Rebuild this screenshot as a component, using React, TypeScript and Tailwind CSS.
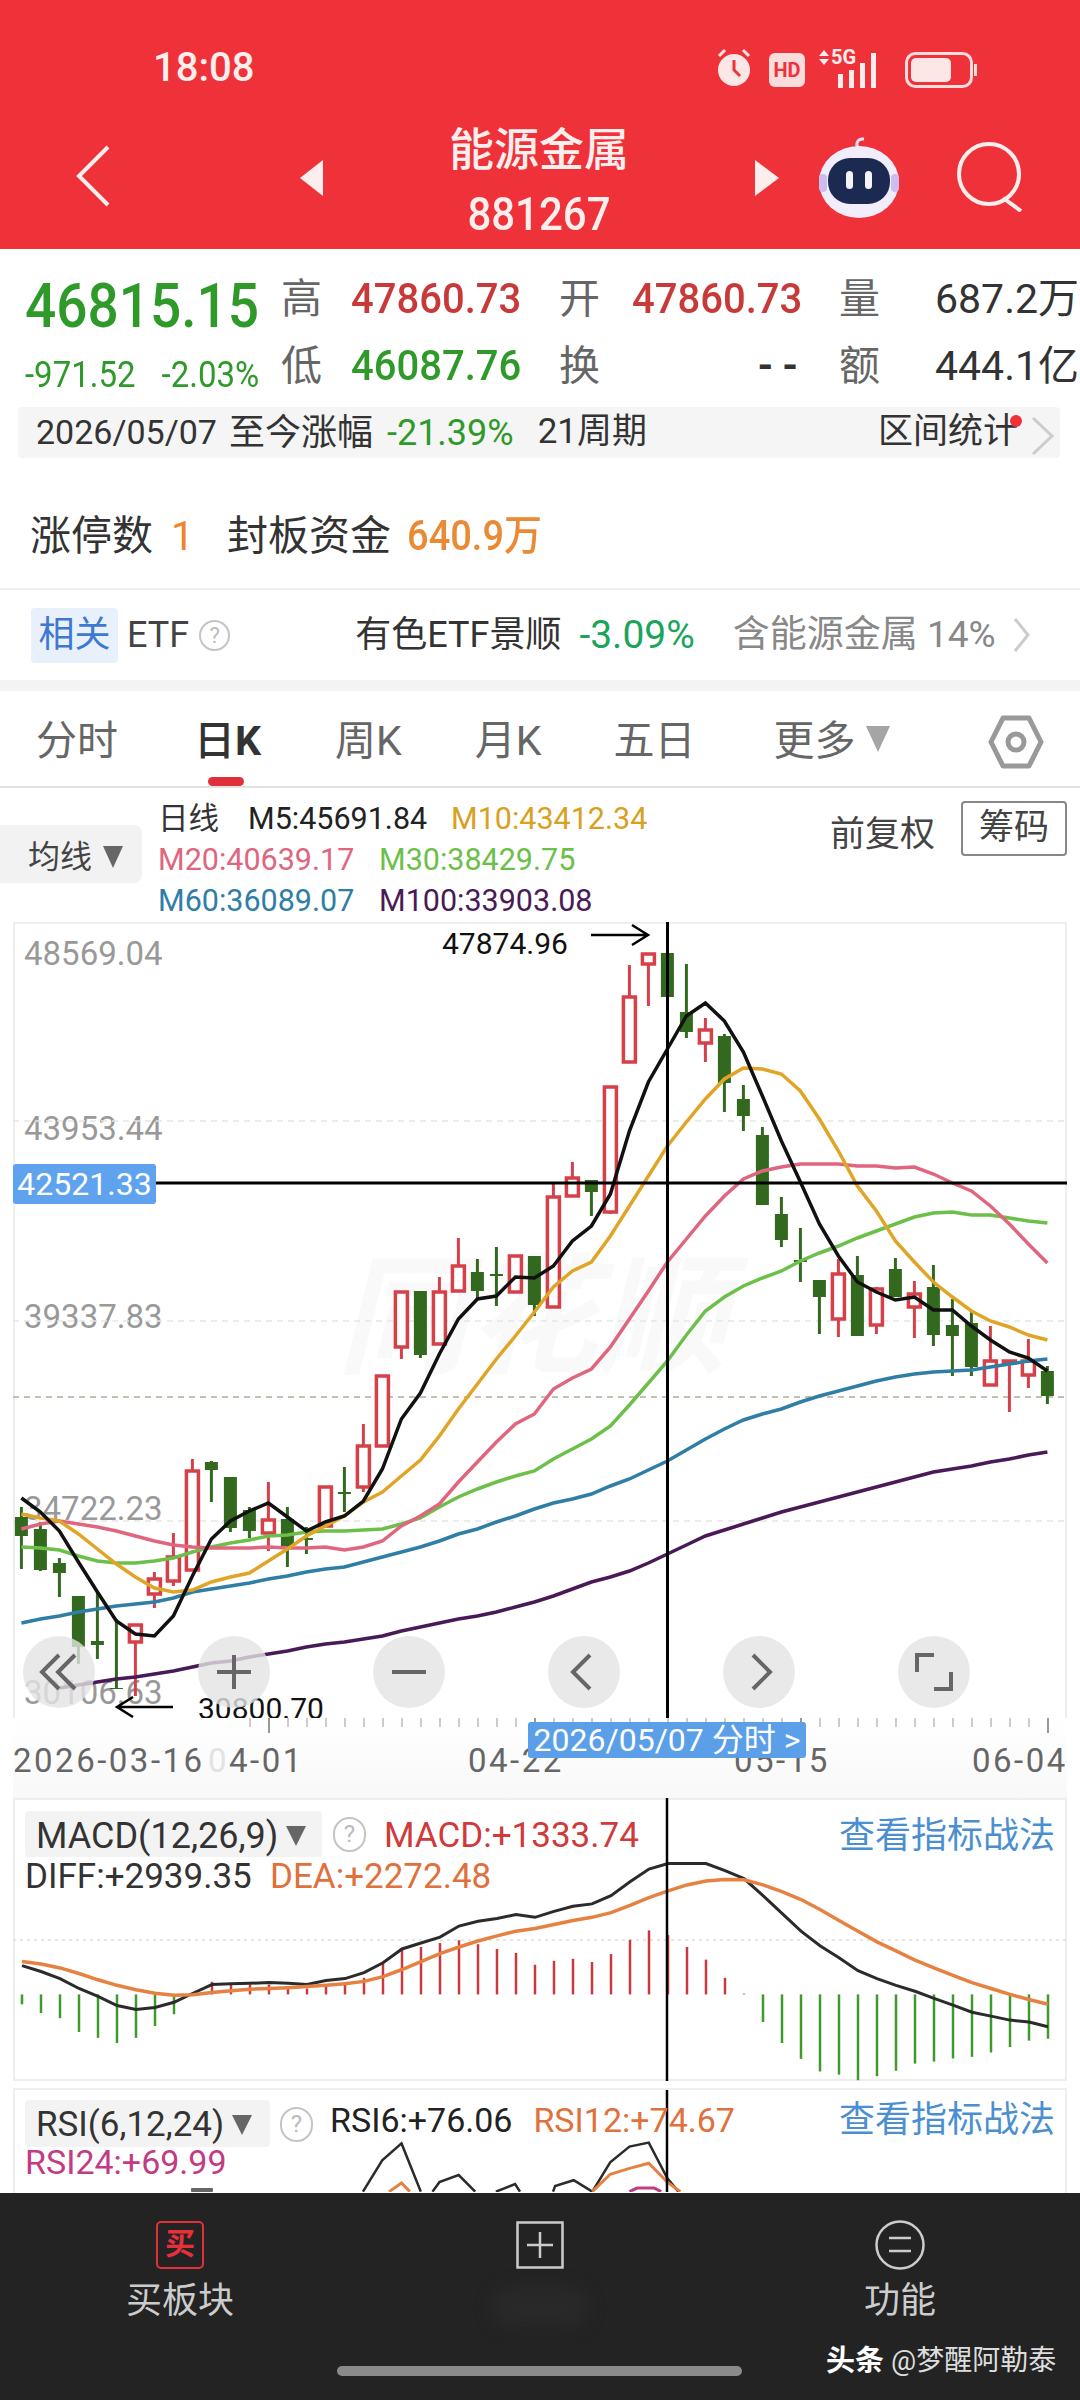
import { type ReactNode } from 'react'

const candleX = (i: number) => 21.4 + 19 * i

// [isRed, bodyTop, bodyBottom, wickTop, wickBottom]
const candles: [number, number, number, number, number][] = [
  [0, 1518, 1537, 1508, 1570], [0, 1530, 1571, 1523, 1572], [0, 1564, 1574, 1559, 1598], [0, 1597, 1648, 1597, 1665],
  [0, 1642, 1646, 1592, 1660], [0, 1689, 1690, 1620, 1690], [1, 1626, 1643, 1626, 1697], [1, 1580, 1595, 1573, 1609],
  [1, 1558, 1582, 1534, 1587], [1, 1472, 1571, 1460, 1572], [0, 1463, 1471, 1462, 1503], [0, 1478, 1529, 1478, 1533],
  [0, 1511, 1532, 1508, 1539], [1, 1521, 1534, 1483, 1552], [0, 1520, 1547, 1508, 1568], [0, 1539, 1541, 1528, 1555],
  [1, 1488, 1527, 1488, 1527], [0, 1493, 1495, 1468, 1513], [1, 1447, 1488, 1425, 1493], [1, 1377, 1447, 1376, 1447],
  [1, 1293, 1348, 1293, 1360], [0, 1292, 1356, 1292, 1359], [1, 1293, 1345, 1278, 1345], [1, 1267, 1292, 1239, 1292],
  [0, 1273, 1292, 1260, 1300], [0, 1275, 1277, 1248, 1307], [1, 1257, 1293, 1257, 1293], [0, 1257, 1306, 1257, 1317],
  [1, 1198, 1308, 1183, 1308], [1, 1179, 1197, 1163, 1197], [0, 1181, 1193, 1181, 1217], [1, 1088, 1213, 1087, 1215],
  [1, 998, 1063, 966, 1063], [1, 955, 965, 955, 1007], [0, 954, 998, 954, 998], [0, 1013, 1033, 965, 1039],
  [1, 1031, 1044, 1019, 1063], [0, 1037, 1084, 1035, 1113], [0, 1100, 1117, 1086, 1132], [0, 1136, 1206, 1128, 1206],
  [0, 1215, 1241, 1198, 1248], [0, 1261, 1263, 1229, 1283], [0, 1281, 1298, 1281, 1335], [1, 1275, 1320, 1260, 1338],
  [0, 1276, 1337, 1257, 1337], [1, 1290, 1326, 1288, 1335], [0, 1270, 1298, 1259, 1298], [1, 1295, 1308, 1282, 1339],
  [0, 1288, 1336, 1266, 1347], [0, 1326, 1337, 1300, 1377], [0, 1324, 1368, 1312, 1377], [1, 1362, 1386, 1327, 1386],
  [1, 1362, 1364, 1362, 1413], [1, 1362, 1376, 1340, 1389], [0, 1372, 1397, 1367, 1405],
]

const ma5 = [1499, 1513, 1532, 1563, 1593, 1622, 1635, 1637, 1617, 1577, 1540, 1522, 1512, 1504, 1518, 1532, 1523, 1517, 1502, 1470, 1420, 1394, 1355, 1320, 1300, 1297, 1278, 1279, 1267, 1242, 1227, 1195, 1132, 1083, 1050, 1017, 1004, 1022, 1053, 1097, 1142, 1183, 1225, 1257, 1283, 1293, 1301, 1298, 1311, 1311, 1327, 1341, 1353, 1359, 1372]
const ma10 = [1515, 1519, 1522, 1535, 1550, 1565, 1578, 1589, 1593, 1591, 1583, 1578, 1574, 1562, 1550, 1537, 1527, 1517, 1503, 1493, 1477, 1461, 1437, 1410, 1385, 1360, 1337, 1313, 1288, 1272, 1263, 1237, 1207, 1177, 1147, 1123, 1100, 1080, 1069, 1070, 1075, 1092, 1120, 1152, 1187, 1212, 1242, 1263, 1283, 1298, 1312, 1322, 1328, 1336, 1341]
const ma20 = [1530, 1525, 1522, 1525, 1528, 1532, 1537, 1542, 1546, 1548, 1549, 1549, 1549, 1548, 1549, 1549, 1548, 1551, 1548, 1542, 1527, 1517, 1505, 1483, 1463, 1443, 1425, 1415, 1390, 1379, 1370, 1348, 1320, 1292, 1263, 1240, 1217, 1197, 1180, 1172, 1168, 1165, 1165, 1165, 1167, 1167, 1169, 1168, 1175, 1184, 1192, 1207, 1225, 1245, 1264]
const ma30 = [1548, 1549, 1551, 1557, 1562, 1564, 1564, 1562, 1559, 1553, 1548, 1544, 1541, 1537, 1536, 1533, 1532, 1532, 1531, 1530, 1525, 1519, 1508, 1498, 1490, 1483, 1477, 1472, 1460, 1450, 1440, 1427, 1406, 1384, 1362, 1336, 1312, 1298, 1287, 1279, 1272, 1262, 1254, 1247, 1239, 1232, 1225, 1218, 1214, 1213, 1216, 1216, 1219, 1222, 1224]
const ma60 = [1624, 1620, 1617, 1613, 1610, 1607, 1605, 1603, 1599, 1593, 1590, 1587, 1584, 1580, 1577, 1573, 1570, 1568, 1563, 1558, 1553, 1548, 1542, 1535, 1530, 1523, 1517, 1510, 1504, 1500, 1495, 1487, 1480, 1471, 1462, 1451, 1440, 1430, 1421, 1415, 1410, 1403, 1397, 1392, 1387, 1382, 1378, 1375, 1373, 1372, 1371, 1368, 1365, 1362, 1360]
const ma100 = [0, 0, 1689, 1686, 1683, 1680, 1678, 1675, 1672, 1668, 1664, 1662, 1658, 1655, 1652, 1648, 1645, 1643, 1640, 1637, 1632, 1628, 1624, 1620, 1617, 1613, 1608, 1603, 1597, 1590, 1583, 1578, 1572, 1564, 1555, 1546, 1537, 1531, 1525, 1519, 1513, 1508, 1503, 1498, 1493, 1488, 1483, 1478, 1473, 1470, 1467, 1463, 1460, 1456, 1453]

const maPoints = (ys: number[]) =>
  ys.map((y, i) => (y ? `${candleX(i)},${y}` : '')).filter(Boolean).join(' ')

// MACD values, measured from the top of the crop
const macdPy = (p: number) => 1780 + p / 2.53
const macdX = (i: number) => 22 + 19 * i
const macdBars = [570, 592, 605, 640, 655, 668, 655, 625, 595, 545, 513, 520, 520, 520, 525, 530, 522, 515, 503, 465, 428, 425, 415, 408, 418, 430, 440, 470, 460, 455, 463, 443, 407, 383, 395, 425, 457, 503, 543, 615, 668, 708, 740, 748, 762, 752, 738, 720, 715, 707, 703, 692, 678, 662, 657]
const diff = [472, 487, 505, 530, 550, 573, 583, 578, 565, 542, 520, 518, 517, 515, 517, 520, 510, 505, 490, 465, 430, 415, 400, 372, 360, 353, 343, 350, 335, 322, 316, 295, 260, 228, 214, 214, 214, 232, 252, 295, 340, 385, 422, 452, 485, 505, 522, 537, 555, 572, 590, 600, 610, 615, 627]
const dea = [462, 468, 478, 492, 508, 522, 533, 542, 547, 546, 540, 536, 532, 530, 528, 525, 522, 518, 512, 500, 482, 462, 442, 425, 410, 397, 385, 378, 368, 358, 350, 338, 320, 300, 283, 268, 258, 254, 255, 268, 285, 305, 330, 358, 385, 412, 435, 458, 478, 497, 515, 530, 545, 558, 570]

const rsiPoints = (pts: number[][]) => pts.map(([x, y]) => `${x / 1.452},${1780 + y / 2.53}`).join(' ')
const rsiBlack = [
  [[527, 1044], [555, 965], [583, 922], [611, 1044]],
  [[628, 1044], [638, 1020], [666, 1002], [690, 1044]],
  [[720, 1044], [748, 1025], [755, 1044]],
  [[803, 1044], [806, 1030], [833, 1015], [860, 1044], [886, 970], [914, 930], [942, 920], [969, 1010], [985, 1044]],
]
const rsiOrange = [
  [[565, 1044], [583, 1022], [595, 1044]],
  [[860, 1044], [886, 1000], [914, 985], [942, 972], [969, 1020], [988, 1044]],
]

function Question({ className }: { className: string }) {
  return (
    <span className={`flex items-center justify-center rounded-full border-2 border-[#c4c4c4] text-[#bbb] ${className}`}>?</span>
  )
}

function RoundButton({ children }: { children: ReactNode }) {
  return (
    <div className="w-[72px] h-[72px] rounded-full bg-[#e4e4e4]/80 flex items-center justify-center">
      <svg width="44" height="44" viewBox="0 0 44 44" fill="none" stroke="#666" strokeWidth="4">
        {children}
      </svg>
    </div>
  )
}

function Tick({ major }: { major?: boolean }) {
  return <div className={`w-[2px] ${major ? 'h-[15px] bg-[#999]' : 'h-[9px] bg-[#ccc]'}`} />
}

export default function App() {
  return (
    <div className="w-[1080px] h-[2400px] flex flex-col overflow-hidden bg-white text-[#333] [font-family:Roboto,'Noto_Sans_CJK_SC',sans-serif]">
      {/* header */}
      <div className="h-[249px] bg-[#ef3239] text-[#fdeeee] flex flex-col shrink-0">
        <div className="h-[112px] flex items-start pt-[44px] pl-[153px]">
          <div className="w-[563px] text-[40px] leading-[48px] font-medium">18:08</div>
          <svg width="36" height="40" viewBox="0 0 36 40" className="mt-[4px]">
            <circle cx="18" cy="22" r="16" fill="#fde6e6" />
            <path d="M18 12v10l6 6" stroke="#ef3239" strokeWidth="3" fill="none" />
            <path d="M3 8l6-6M33 8l-6-6" stroke="#fde6e6" strokeWidth="3" />
          </svg>
          <div className="ml-[17px] mt-[9px] w-[36px] h-[34px] rounded-[6px] bg-[#fbdcdc] text-[#ef3239] text-[20px] leading-[34px] font-bold text-center">HD</div>
          <div className="ml-[13px] mt-[6px] w-[68px] h-[38px] flex items-end relative">
            <span className="absolute left-[13px] -top-[4px] text-[20px] leading-[22px] font-bold">5G</span>
            <svg width="68" height="38" viewBox="0 0 68 38" fill="#fdeeee">
              <path d="M6 0l5 6H1zM6 15L1 9h10z" />
              <rect x="20" y="24" width="5" height="14" />
              <rect x="31" y="20" width="5" height="18" />
              <rect x="42" y="13" width="5" height="25" />
              <rect x="53" y="3" width="5" height="35" />
            </svg>
          </div>
          <svg width="72" height="36" viewBox="0 0 72 36" className="ml-[19px] mt-[8px]">
            <rect x="1.5" y="1.5" width="65" height="33" rx="9" fill="none" stroke="#fbdcdc" strokeWidth="3" />
            <rect x="6" y="6" width="40" height="24" rx="5" fill="#fde6e6" />
            <rect x="69" y="12" width="3" height="12" fill="#fbdcdc" />
          </svg>
        </div>
        <div className="flex-1 flex items-start pl-[75px]">
          <svg width="36" height="62" viewBox="0 0 36 62" className="mt-[33px]" fill="none" stroke="#fdeeee" strokeWidth="4">
            <path d="M33 2L4 31l29 29" />
          </svg>
          <svg width="23" height="36" viewBox="0 0 23 36" className="ml-[189px] mt-[48px]" fill="#fdeeee"><path d="M23 0v36L0 18z" /></svg>
          <div className="w-[432px] flex flex-col items-center">
            <div className="text-[45px] leading-[54px] mt-[12px] font-medium">能源金属</div>
            <div className="text-[42px] leading-[50px] mt-[11px] font-medium scale-y-[1.12]">881267</div>
          </div>
          <svg width="24" height="36" viewBox="0 0 24 36" className="mt-[48px]" fill="#fdeeee"><path d="M0 0v36l24-18z" /></svg>
          <svg width="84" height="86" viewBox="0 0 84 86" className="ml-[38px] mt-[22px]">
            <path d="M42 14c-4-3-2-10 5-9" fill="none" stroke="#f3dff5" strokeWidth="3" />
            <ellipse cx="42" cy="48" rx="40" ry="36" fill="#f2edfb" />
            <rect x="2" y="40" width="8" height="18" rx="4" fill="#cdbcf0" />
            <rect x="74" y="40" width="8" height="18" rx="4" fill="#cdbcf0" />
            <rect x="11" y="24" width="62" height="46" rx="22" fill="#1c2a52" />
            <rect x="29" y="37" width="7" height="18" rx="3.5" fill="#f4f4f8" />
            <rect x="48" y="37" width="7" height="18" rx="3.5" fill="#f4f4f8" />
          </svg>
          <svg width="68" height="70" viewBox="0 0 68 70" className="ml-[56px] mt-[30px]" fill="none" stroke="#fdeeee" strokeWidth="4">
            <circle cx="32" cy="32" r="30" />
            <path d="M46 56l18 13" />
          </svg>
        </div>
      </div>

      {/* quote */}
      <div className="h-[158px] shrink-0 flex pt-[28px] relative">
        <div className="w-[281px] pl-[25px] text-[#2f9a2a]">
          <div className="text-[55px] leading-[44px] mt-[4px] font-medium inline-block origin-top scale-y-[1.12]">46815.15</div>
          <div className="flex text-[33px] leading-[36px] mt-[28px] gap-[26px] scale-y-[1.12] whitespace-nowrap">
            <span>-971.52</span>
            <span>-2.03%</span>
          </div>
        </div>
        <div className="grid grid-cols-[70px_208px_73px_207px_96px_1fr] grid-rows-[44px_44px] gap-y-[23px] items-center text-[41px] leading-[44px] text-[#666] whitespace-nowrap">
          <span>高</span>
          <span className="text-[40px] font-medium text-[#c83a3a] scale-y-[1.08] origin-left">47860.73</span>
          <span>开</span>
          <span className="text-[40px] font-medium text-[#c83a3a] scale-y-[1.08] origin-left">47860.73</span>
          <span>量</span>
          <span className="text-[41px] text-[#333]">687.2万</span>
          <span>低</span>
          <span className="text-[40px] font-medium text-[#2f9a2a] scale-y-[1.08] origin-left">46087.76</span>
          <span>换</span>
          <span className="text-[40px] font-bold tracking-[9px] text-[#333] text-right pr-[32px]">--</span>
          <span>额</span>
          <span className="text-[41px] text-[#333]">444.1亿</span>
        </div>
      </div>

      {/* range strip */}
      <div className="h-[51px] shrink-0 ml-[18px] w-[1042px] rounded-[4px] bg-[#f5f5f5] flex items-center pl-[18px] text-[34px] text-[#333] relative">
        <span>2026/05/07</span>
        <span className="ml-[12px] text-[36px]">至今涨幅</span>
        <span className="ml-[14px] text-[36px] text-[#2f9a2a]">-21.39%</span>
        <span className="ml-[24px] text-[35px]">21周期</span>
        <span className="ml-auto mr-[42px] text-[35px]">区间统计</span>
        <span className="absolute left-[992px] top-[8px] w-[12px] h-[12px] rounded-full bg-[#ef3239]" />
        <svg width="26" height="40" viewBox="0 0 26 40" className="absolute right-[4px] top-[9px]" fill="none" stroke="#ccc" strokeWidth="3"><path d="M3 2l19 18L3 38" /></svg>
      </div>

      {/* limit up */}
      <div className="h-[130px] shrink-0 flex items-start pt-[54px] pl-[30px] text-[41px] leading-[48px]">
        <span>涨停数</span>
        <span className="ml-[18px] text-[#f0842c]">1</span>
        <span className="ml-[33px]">封板资金</span>
        <span className="ml-[16px] text-[38px] text-[#ea8a34] font-medium scale-y-[1.1]">640.9万</span>
      </div>

      {/* related etf */}
      <div className="h-[92px] shrink-0 border-t-2 border-[#eee] flex items-center pl-[31px]">
        <span className="w-[87px] h-[55px] rounded-[4px] bg-[#e8f0fb] text-[#3f78d0] text-[36px] leading-[55px] text-center">相关</span>
        <span className="ml-[9px] text-[36px] text-[#444]">ETF</span>
        <Question className="ml-[10px] w-[31px] h-[31px] text-[22px]" />
        <span className="ml-[125px] text-[36px] text-[#333]">有色ETF景顺</span>
        <span className="ml-[18px] text-[39px] text-[#1aa55a]">-3.09%</span>
        <span className="ml-[38px] text-[37px] text-[#888]">含能源金属 14%</span>
        <svg width="18" height="36" viewBox="0 0 18 36" className="ml-[17px]" fill="none" stroke="#ccc" strokeWidth="3"><path d="M2 2l13 16L2 34" /></svg>
      </div>
      <div className="h-[11px] shrink-0 bg-[#f3f3f3]" />

      {/* period tabs */}
      <div className="h-[97px] shrink-0 border-b-2 border-[#e2e2e2] relative flex items-center pt-[6px] text-[41px] text-[#666]">
        <span className="ml-[36px]">分时</span>
        <span className="ml-[76px] text-[#333] font-medium">日<span className="font-bold">K</span></span>
        <span className="ml-[74px]">周K</span>
        <span className="ml-[73px]">月K</span>
        <span className="ml-[72px]">五日</span>
        <span className="ml-[78px]">更多</span>
        <svg width="24" height="26" viewBox="0 0 24 26" className="ml-[10px] -mt-[6px]" fill="#a5a5a5"><path d="M0 0h24L12 26z" /></svg>
        <svg width="56" height="54" viewBox="0 0 56 54" className="ml-[98px]" fill="none" stroke="#999" strokeWidth="5">
          <path d="M15 3h26l12 24-12 24H15L3 27z" strokeLinejoin="round" />
          <circle cx="28" cy="27" r="8" />
        </svg>
        <div className="absolute left-[208px] bottom-0 w-[36px] h-[9px] rounded-full bg-[#e0303a]" />
      </div>

      {/* moving average legend */}
      <div className="h-[134px] shrink-0 flex relative">
        <div className="mt-[37px] w-[142px] h-[58px] rounded-r-[8px] bg-[#f2f2f2] flex items-center pl-[28px] pt-[6px] text-[32px] text-[#444]">
          均线
          <svg width="20" height="22" viewBox="0 0 20 22" className="ml-[11px]" fill="#666"><path d="M0 0h20L10 22z" /></svg>
        </div>
        <div className="ml-[16px] flex flex-col pt-[10px] text-[30.5px] leading-[41px] whitespace-nowrap">
          <div className="flex">
            <span className="w-[90px] text-[#333]">日线</span>
            <span className="w-[203px] text-[#222]">M5:45691.84</span>
            <span className="text-[#d9a021]">M10:43412.34</span>
          </div>
          <div className="flex">
            <span className="w-[221px] text-[#e0667f]">M20:40639.17</span>
            <span className="text-[#6cc04a]">M30:38429.75</span>
          </div>
          <div className="flex">
            <span className="w-[221px] text-[#2f7ea6]">M60:36089.07</span>
            <span className="text-[#4a1a56]">M100:33903.08</span>
          </div>
        </div>
        <span className="absolute left-[830px] top-[22px] text-[35px] leading-[50px] text-[#444]">前复权</span>
        <span className="absolute left-[961px] top-[13px] w-[106px] h-[55px] border-2 border-[#888] rounded-[4px] text-center text-[35px] leading-[50px] text-[#444]">筹码</span>
      </div>

      {/* k line panel */}
      <div className="h-[796px] shrink-0 ml-[13px] w-[1054px] relative border-x-2 border-t-2 border-[#eee]">
        <div className="absolute left-[9px] top-[10px] text-[33px] leading-[40px] text-[#999]">48569.04</div>
        <div className="absolute left-[9px] top-[185px] text-[33px] leading-[40px] text-[#999]">43953.44</div>
        <div className="absolute left-[9px] top-[373px] text-[33px] leading-[40px] text-[#999]">39337.83</div>
        <div className="absolute left-[9px] top-[565px] text-[33px] leading-[40px] text-[#999]">34722.23</div>
        <div className="absolute left-[9px] top-[749px] text-[33px] leading-[40px] text-[#999]">30106.63</div>
        <div className="absolute left-[322px] top-[325px] text-[130px] leading-[140px] font-bold italic text-[#f9f9f9]">同花顺</div>
        <svg className="absolute -left-[2px] -top-[2px]" width="1054" height="796" viewBox="13 923 1054 796" fill="none">
          {[1122, 1322, 1522].map(y => (
            <line key={y} x1="13" x2="1067" y1={y} y2={y} stroke="#e6e6e6" strokeWidth="1.5" strokeDasharray="6 5" />
          ))}
          <line x1="13" x2="1067" y1="1398" y2="1398" stroke="#b5ab96" strokeWidth="1.5" strokeDasharray="6 5" />
          {candles.map(([red, top, bottom, high, low], i) => {
            const x = candleX(i)
            const color = red ? '#d64048' : '#33691e'
            return (
              <g key={i}>
                <line x1={x} x2={x} y1={high} y2={low} stroke={color} strokeWidth="3" />
                {red ? (
                  <rect x={x - 6} y={top} width="12" height={bottom - top} fill="#fff" stroke={color} strokeWidth="3.5" />
                ) : (
                  <rect x={x - 6.5} y={top} width="13" height={bottom - top} fill={color} />
                )}
              </g>
            )
          })}
          <polyline points={maPoints(ma100)} stroke="#4a1a56" strokeWidth="3.5" />
          <polyline points={maPoints(ma60)} stroke="#2f7ea6" strokeWidth="3.5" />
          <polyline points={maPoints(ma30)} stroke="#6cc04a" strokeWidth="3.5" />
          <polyline points={maPoints(ma20)} stroke="#e0667f" strokeWidth="3.5" />
          <polyline points={maPoints(ma10)} stroke="#e0a526" strokeWidth="3.5" />
          <polyline points={maPoints(ma5)} stroke="#111" strokeWidth="3.5" />
          <line x1="155" x2="1067" y1="1184" y2="1184" stroke="#000" strokeWidth="3" />
          <line x1="667.5" x2="667.5" y1="923" y2="1721" stroke="#000" strokeWidth="3" />
          <path d="M591 936h56M632 926l16 10-16 10" stroke="#000" strokeWidth="2.5" />
          <path d="M173 1708h-55M133 1698l-16 10 16 10" stroke="#000" strokeWidth="2.5" />
        </svg>
        <div className="absolute left-[427px] top-[0px] text-[30px] leading-[40px] text-[#111]">47874.96</div>
        <div className="absolute left-[183px] top-[765px] text-[30px] leading-[40px] text-[#111]">30800.70</div>
        <div className="absolute -left-[2px] top-[240px] w-[143px] h-[40px] rounded-[3px] bg-[#5fa3ef] text-white text-[32px] leading-[40px] text-center">42521.33</div>
        <div className="absolute left-[8px] top-[712px] flex gap-[103px]">
          <RoundButton><path d="M22 5L5 22l17 17M38 5L21 22l17 17" /></RoundButton>
          <RoundButton><path d="M22 5v34M5 22h34" /></RoundButton>
          <RoundButton><path d="M5 22h34" /></RoundButton>
          <RoundButton><path d="M28 5L11 22l17 17" /></RoundButton>
          <RoundButton><path d="M16 5l17 17-17 17" /></RoundButton>
          <RoundButton><path d="M5 22V5h17M39 22v17H22" /></RoundButton>
        </div>
      </div>

      {/* date axis */}
      <div className="h-[80px] shrink-0 ml-[13px] w-[1054px] relative bg-linear-to-b from-white to-[#f8f8f8]">
        <div className="flex pl-[236px] gap-[17px] items-start">
          {Array.from({ length: 43 }, (_, i) => (
            <Tick key={i} major={i === 1 || i === 15 || i === 29 || i === 42} />
          ))}
        </div>
        <div className="absolute inset-x-0 top-[23px] grid grid-cols-[193px_262px_266px_238px_1fr] whitespace-nowrap text-[33px] leading-[40px] tracking-[2.5px] text-[#666]">
          <span>2026-03-16</span>
          <span className="pl-[2px]"><span className="text-[#e2e2e2]">0</span>4-01</span>
          <span>04-22</span>
          <span>05-15</span>
          <span>06-04</span>
        </div>
        <div className="absolute left-[515px] top-[4px] w-[278px] h-[36px] rounded-[3px] bg-[#5a9fe8] text-white text-[32px] leading-[36px] text-center whitespace-nowrap">2026/05/07 分时 &gt;</div>
      </div>

      {/* macd panel */}
      <div className="h-[283px] shrink-0 ml-[13px] w-[1054px] relative border-x-2 border-y-2 border-[#eee]">
        <svg className="absolute -left-[2px] -top-[2px]" width="1054" height="283" viewBox="13 1799 1054 283" fill="none">
          <line x1="13" x2="1067" y1="1941" y2="1941" stroke="#ddd" strokeWidth="1.5" strokeDasharray="3 4" />
          {macdBars.map((p, i) => (
            <line key={i} x1={macdX(i)} x2={macdX(i)} y1={macdPy(545)} y2={macdPy(p)} strokeWidth="2.5" stroke={p < 545 ? '#c8383c' : '#3f9a2c'} />
          ))}
          <polyline points={diff.map((p, i) => `${macdX(i)},${macdPy(p)}`).join(' ')} stroke="#2b2b2b" strokeWidth="3" />
          <polyline points={dea.map((p, i) => `${macdX(i)},${macdPy(p)}`).join(' ')} stroke="#e58241" strokeWidth="3.5" />
          <line x1="667" x2="667" y1="1799" y2="2082" stroke="#000" strokeWidth="2.5" />
        </svg>
        <div className="relative pt-[11px] pl-[10px]">
          <div className="flex items-center h-[46px] text-[35px] leading-[46px] whitespace-nowrap">
            <div className="w-[297px] h-[46px] rounded-[4px] bg-[#f3f3f3] flex items-center pl-[11px] pt-[4px]">
              <span className="text-[36px]">MACD(12,26,9)</span>
              <svg width="20" height="20" viewBox="0 0 20 20" className="ml-[8px]" fill="#666"><path d="M0 0h20L10 20z" /></svg>
            </div>
            <Question className="ml-[11px] w-[33px] h-[35px] text-[24px]" />
            <span className="ml-[18px] pt-[4px] text-[#d03a3a]">MACD:+1333.74</span>
            <span className="ml-auto mr-[10px] pt-[4px] text-[36px] text-[#4b8fd1]">查看指标战法</span>
          </div>
          <div className="flex text-[35px] leading-[44px] mt-[-2px]">
            <span className="w-[245px]">DIFF:+2939.35</span>
            <span className="text-[#e0703c]">DEA:+2272.48</span>
          </div>
        </div>
      </div>

      {/* rsi panel */}
      <div className="flex-1 mt-[7px] ml-[13px] w-[1054px] relative overflow-hidden border-x-2 border-t-2 border-[#eee]">
        <svg className="absolute -left-[2px] -top-[2px]" width="1054" height="104" viewBox="13 2089 1054 104" fill="none">
          {rsiBlack.map((pts, i) => <polyline key={i} points={rsiPoints(pts)} stroke="#2b2b2b" strokeWidth="2.5" />)}
          {rsiOrange.map((pts, i) => <polyline key={i} points={rsiPoints(pts)} stroke="#e58241" strokeWidth="3" />)}
          <polyline points={rsiPoints([[914, 1044], [925, 1035], [950, 1035], [960, 1044]])} stroke="#c23b83" strokeWidth="3" />
          <rect x="191" y="2189" width="22" height="4" rx="1" fill="#666" />
          <line x1="667" x2="667" y1="2089" y2="2193" stroke="#000" strokeWidth="2.5" />
        </svg>
        <div className="relative pt-[10px] pl-[10px]">
          <div className="flex items-start h-[47px] text-[34px] leading-[47px] whitespace-nowrap">
            <div className="w-[245px] h-[47px] rounded-[4px] bg-[#f3f3f3] flex items-center pl-[11px] pt-[2px]">
              <span className="text-[35px]">RSI(6,12,24)</span>
              <svg width="20" height="20" viewBox="0 0 20 20" className="ml-[8px]" fill="#666"><path d="M0 0h20L10 20z" /></svg>
            </div>
            <Question className="ml-[10px] mt-[7px] w-[33px] h-[35px] text-[24px]" />
            <div className="flex -mt-[3px]">
              <span className="ml-[17px] text-[#222]">RSI6:+76.06</span>
              <span className="ml-[21px] text-[#e0703c]">RSI12:+74.67</span>
            </div>
            <span className="ml-auto mr-[10px] -mt-[3px] text-[36px] text-[#4b8fd1]">查看指标战法</span>
          </div>
          <div className="text-[34px] leading-[40px] -mt-[5px] text-[#c23b83]">RSI24:+69.99</div>
        </div>
      </div>

      {/* bottom bar */}
      <div className="h-[207px] shrink-0 bg-[#232323] relative grid grid-cols-[360px_360px_360px] text-[36px] text-[#ccc]">
        <div className="flex flex-col items-center pt-[28px]">
          <span className="w-[48px] h-[48px] rounded-[5px] border-2 border-[#e0303a] text-[#e8303c] text-[30px] leading-[42px] font-bold text-center">买</span>
          <span className="mt-[6px] leading-[52px]">买板块</span>
        </div>
        <div className="flex flex-col items-center pt-[28px]">
          <svg width="48" height="48" viewBox="0 0 48 48" fill="none" stroke="#ccc" strokeWidth="2.5">
            <rect x="1.5" y="1.5" width="45" height="45" />
            <path d="M24 11v26M11 24h26" />
          </svg>
          <span className="mt-[18px] w-[96px] h-[40px] rounded-full bg-[#292929] blur-sm" />
        </div>
        <div className="flex flex-col items-center pt-[27px]">
          <svg width="50" height="50" viewBox="0 0 50 50" fill="none" stroke="#ccc" strokeWidth="2.5">
            <circle cx="25" cy="25" r="23.5" />
            <path d="M14 18h22M14 31h22" />
          </svg>
          <span className="mt-[5px] leading-[52px]">功能</span>
        </div>
        <div className="absolute left-[826px] top-[148px] flex items-center text-[28px] leading-[40px] text-[#ddd]">
          <span className="font-bold text-[29px] text-white">头条</span>
          <span className="ml-[7px]">@梦醒阿勒泰</span>
        </div>
        <div className="absolute left-[337px] top-[173px] w-[405px] h-[10px] rounded-full bg-[#8a8a8a]" />
      </div>
    </div>
  )
}
